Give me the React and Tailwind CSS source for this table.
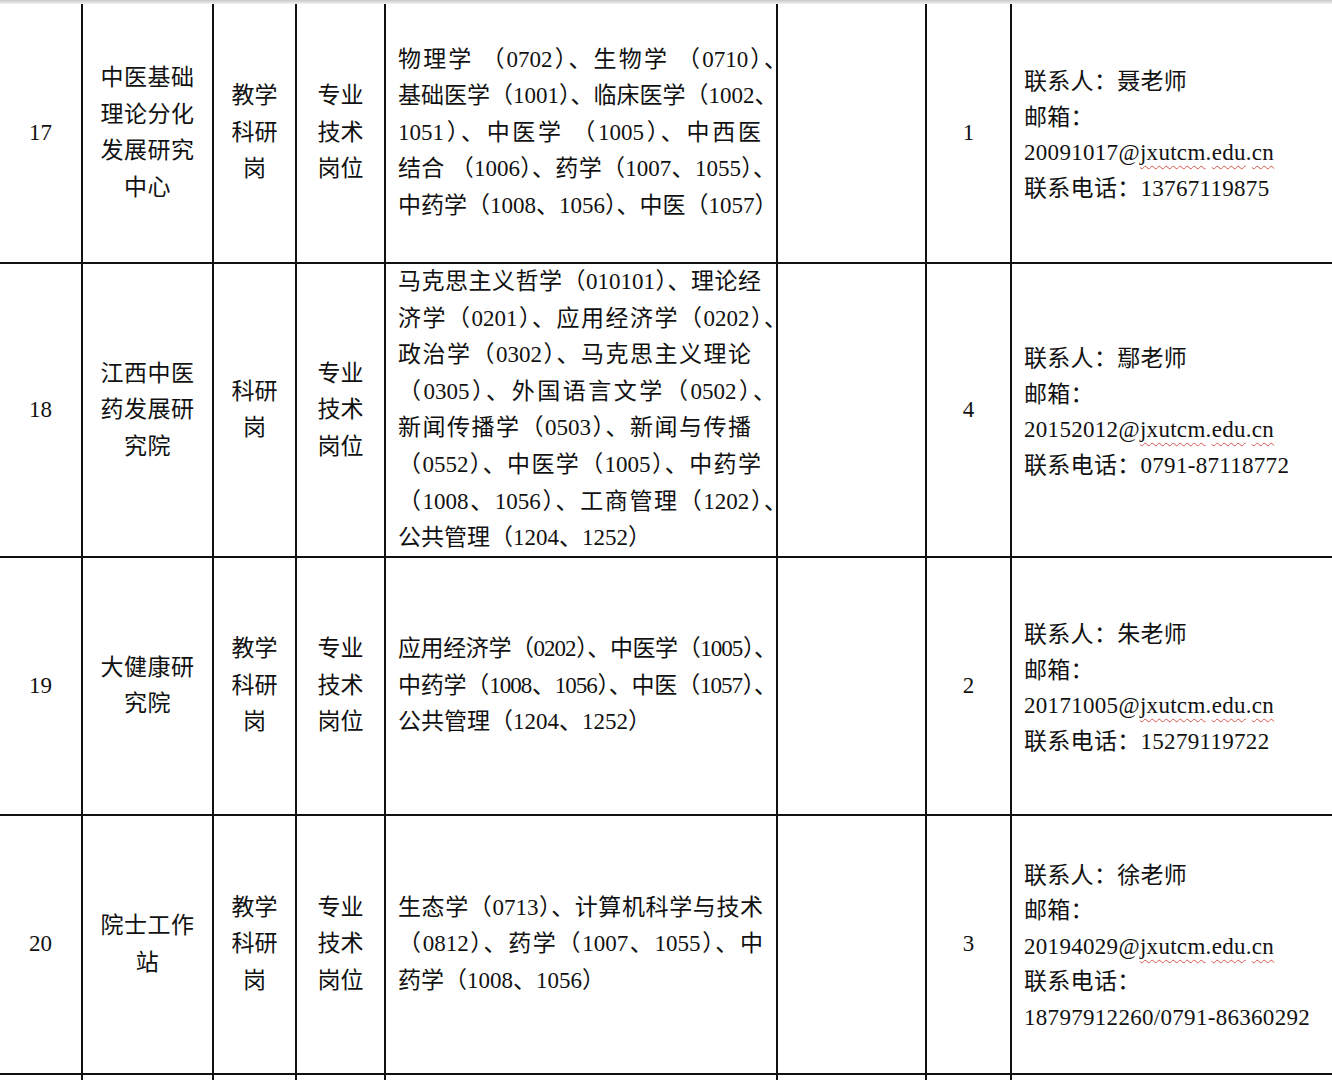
import React from 'react';

// each majors line: [text, width class] - width class null => natural, left aligned
const rows = [
  {
    no: '17',
    h: 'h-[260px]',
    dept: ['中医基础', '理论分化', '发展研究', '中心'],
    post: ['教学', '科研', '岗'],
    majors: [
      ['物理学 （0702）、生物学 （0710）、', 'w-[389px]'],
      ['基础医学（1001）、临床医学（1002、', 'w-[378px]'],
      ['1051）、中医学 （1005）、中西医', 'w-[363px]'],
      ['结合 （1006）、药学（1007、1055）、', 'w-[378px]'],
      ['中药学（1008、1056）、中医（1057）', 'w-[378px]'],
    ],
    count: '1',
    contact: ['联系人：聂老师', '邮箱：', { id: '20091017' }, '联系电话：13767119875'],
  },
  {
    no: '18',
    h: 'h-[294px]',
    dept: ['江西中医', '药发展研', '究院'],
    post: ['科研', '岗'],
    majors: [
      ['马克思主义哲学（010101）、理论经', 'w-[363px]'],
      ['济学（0201）、应用经济学（0202）、', 'w-[389px]'],
      ['政治学（0302）、马克思主义理论', 'w-[353px]'],
      ['（0305）、外国语言文学（0502）、', 'w-[378px]'],
      ['新闻传播学（0503）、新闻与传播', 'w-[353px]'],
      ['（0552）、中医学（1005）、中药学', 'w-[363px]'],
      ['（1008、1056）、工商管理（1202）、', 'w-[389px]'],
      ['公共管理（1204、1252）', null],
    ],
    count: '4',
    contact: ['联系人：鄢老师', '邮箱：', { id: '20152012' }, '联系电话：0791-87118772'],
  },
  {
    no: '19',
    h: 'h-[258px]',
    dept: ['大健康研', '究院'],
    post: ['教学', '科研', '岗'],
    majors: [
      ['应用经济学（0202）、中医学（1005）、', 'w-[378px] tracking-[-1px]'],
      ['中药学（1008、1056）、中医（1057）、', 'w-[378px] tracking-[-1px]'],
      ['公共管理（1204、1252）', null],
    ],
    count: '2',
    contact: ['联系人：朱老师', '邮箱：', { id: '20171005' }, '联系电话：15279119722'],
  },
  {
    no: '20',
    h: 'h-[259px]',
    dept: ['院士工作', '站'],
    post: ['教学', '科研', '岗'],
    majors: [
      ['生态学（0713）、计算机科学与技术', 'w-[365px]'],
      ['（0812）、药学（1007、1055）、中', 'w-[365px]'],
      ['药学（1008、1056）', null],
    ],
    count: '3',
    contact: ['联系人：徐老师', '邮箱：', { id: '20194029' }, '联系电话：', '18797912260/0791-86360292'],
  },
];

const cols = 'grid grid-cols-[83px_131px_83px_89px_392px_149px_85px_400px]';
const cell = 'border-r-2 border-[#111] flex items-center';

function Email({ id }) {
  const squiggle = 'underline decoration-wavy decoration-[#d9534f] decoration-1 underline-offset-[5px]';
  return (
    <div>
      {id}@<span className={squiggle}>jxutcm</span>.<span className={squiggle}>edu</span>.<span className={squiggle}>cn</span>
    </div>
  );
}

function Stack({ lines, className }) {
  return (
    <div className={`text-center leading-[36.5px] ${className || ''}`}>
      {lines.map((l) => (
        <div key={l}>{l}</div>
      ))}
    </div>
  );
}

function Row({ r }) {
  return (
    <div className={`${cols} border-b-2 border-[#111] ${r.h}`}>
      <div className={`${cell} justify-center`}>{r.no}</div>
      <div className={`${cell} justify-center`}>
        <Stack lines={r.dept} className="tracking-[0.5px]" />
      </div>
      <div className={`${cell} justify-center`}>
        <Stack lines={r.post} />
      </div>
      <div className={`${cell} justify-center`}>
        <Stack lines={['专业', '技术', '岗位']} />
      </div>
      <div className={`${cell} pl-[12px]`}>
        <div className="leading-[36.6px]">
          {r.majors.map(([text, w], i) => (
            <div
              key={i}
              className={w ? `whitespace-nowrap text-justify [text-align-last:justify] ${w}` : 'whitespace-nowrap'}
            >
              {text}
            </div>
          ))}
        </div>
      </div>
      <div className={cell}></div>
      <div className={`${cell} justify-center`}>{r.count}</div>
      <div className="flex items-center pl-[12px] pt-[4px]">
        <div className="leading-[35.5px] tracking-[0.3px]">
          {r.contact.map((l, i) =>
            typeof l === 'string' ? <div key={i}>{l}</div> : <Email key={i} id={l.id} />
          )}
        </div>
      </div>
    </div>
  );
}

export default function App() {
  return (
    <div className="w-[1332px] h-[1080px] overflow-hidden bg-white text-[#111] text-[23px] font-['Liberation_Serif','Noto_Sans_CJK_SC',serif]">
      <div className="h-[4px] bg-gradient-to-b from-[#c8c8c8] to-[#f2f2f2]"></div>
      {rows.map((r) => (
        <Row key={r.no} r={r} />
      ))}
      <div className={`${cols} h-[20px]`}>
        <div className="border-r-2 border-[#111]"></div>
        <div className="border-r-2 border-[#111]"></div>
        <div className="border-r-2 border-[#111]"></div>
        <div className="border-r-2 border-[#111]"></div>
        <div className="border-r-2 border-[#111]"></div>
        <div className="border-r-2 border-[#111]"></div>
        <div className="border-r-2 border-[#111]"></div>
        <div></div>
      </div>
    </div>
  );
}
